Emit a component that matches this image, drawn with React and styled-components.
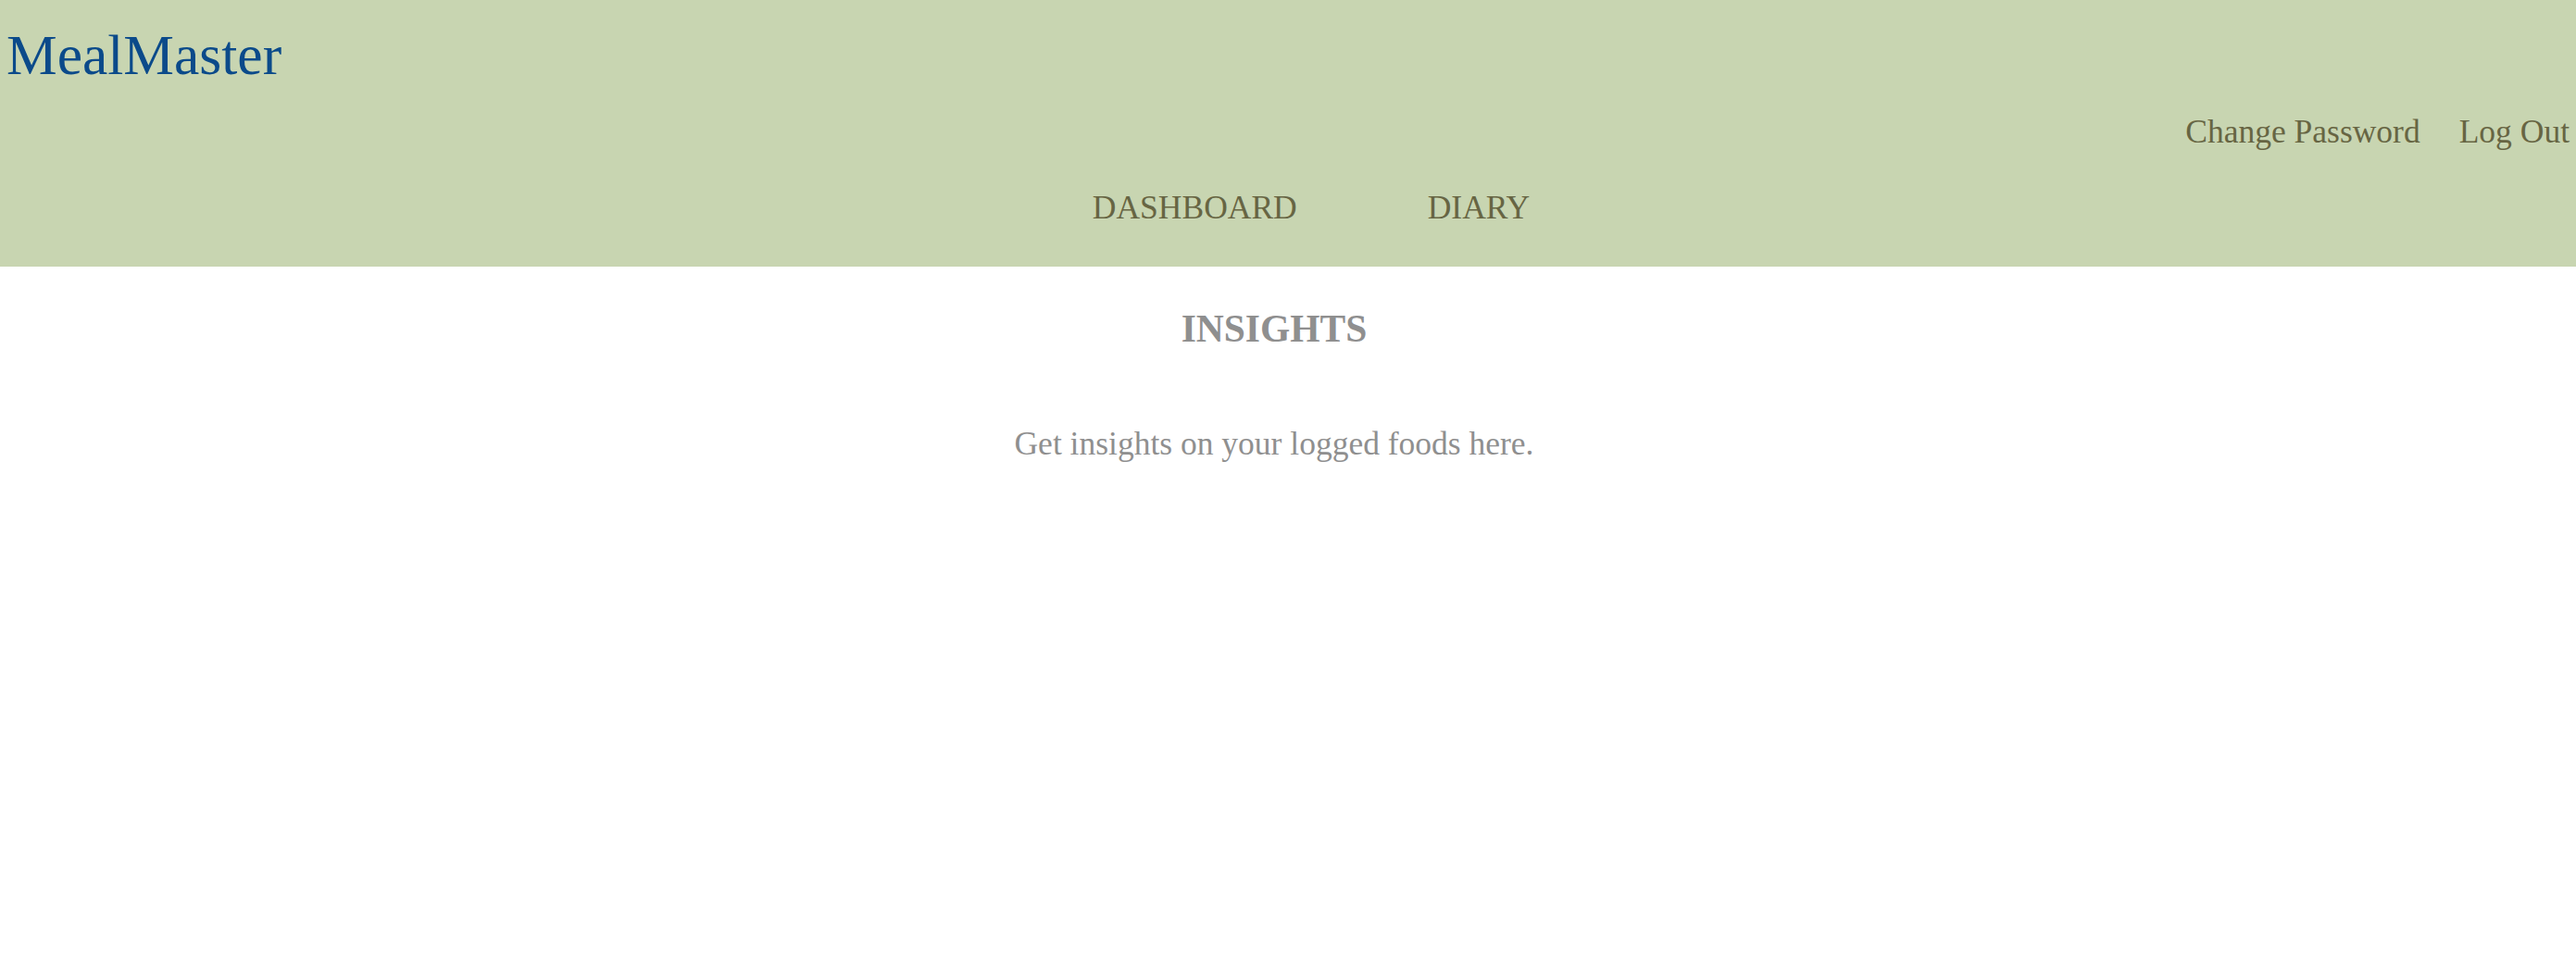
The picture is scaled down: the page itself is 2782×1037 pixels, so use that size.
import React from 'react';
import styled, { createGlobalStyle } from 'styled-components';

const GlobalStyle = createGlobalStyle`
  html, body {
    margin: 0;
    padding: 0;
    background: #ffffff;
    font-family: "Liberation Serif", "Times New Roman", serif;
  }
`;

const Header = styled.header`
  background-color: #c8d5b1;
  padding: 19px 7px 39px 7px;
  display: flex;
  flex-direction: column;
`;

const Logo = styled.h1`
  margin: 0;
  font-size: 61.5px;
  line-height: 80px;
  font-weight: normal;
  color: #0b4a8a;
`;

const AccountLinks = styled.div`
  margin-top: 18px;
  display: flex;
  justify-content: flex-end;
  gap: 42px;
`;

const Link = styled.a`
  font-size: 35.5px;
  line-height: 50px;
  color: #676543;
  text-decoration: none;
  cursor: pointer;
`;

const Nav = styled.nav`
  margin-top: 32px;
  display: flex;
  justify-content: center;
  gap: 141px;
  padding-left: 50px;
`;

const Main = styled.main`
  display: flex;
  flex-direction: column;
  align-items: center;
  padding-right: 30px;
  color: #8f8f8f;
`;

const Title = styled.h3`
  margin: 42px 0 0 0;
  font-size: 41.5px;
  line-height: 50px;
  font-weight: bold;
`;

const Text = styled.p`
  margin: 74px 0 0 0;
  font-size: 35.5px;
  line-height: 50px;
`;

export default function App() {
  return (
    <>
      <GlobalStyle />
      <Header>
        <Logo>MealMaster</Logo>
        <AccountLinks>
          <Link>Change Password</Link>
          <Link>Log Out</Link>
        </AccountLinks>
        <Nav>
          <Link>DASHBOARD</Link>
          <Link>DIARY</Link>
        </Nav>
      </Header>
      <Main>
        <Title>INSIGHTS</Title>
        <Text>Get insights on your logged foods here.</Text>
      </Main>
    </>
  );
}
